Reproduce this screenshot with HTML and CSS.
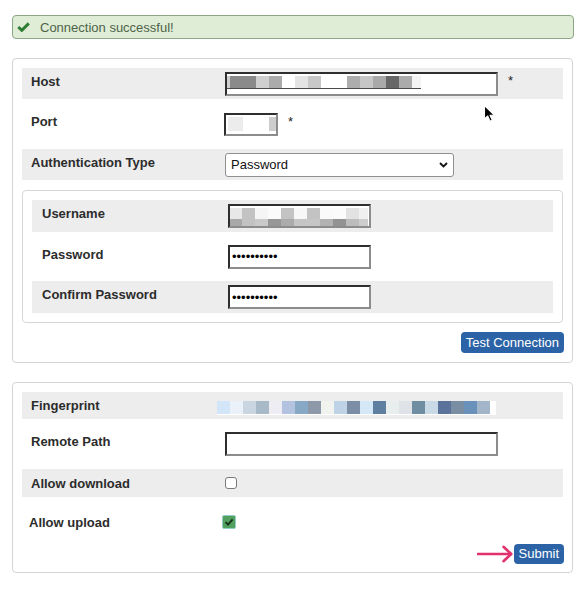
FILE: index.html
```html
<!DOCTYPE html>
<html>
<head>
<meta charset="utf-8">
<title>Connection</title>
<link rel="stylesheet" href="styles.css">
</head>
<body>
<div class="page">
  <div class="alert">
    <svg class="alert-icon" width="13" height="10" viewBox="0 0 13 10"><polyline points="1.3,5 4.8,8.4 11.8,1.4" fill="none" stroke="#2f7c33" stroke-width="2.9"/></svg>
    <span>Connection successful!</span>
  </div>

  <div class="panel">
    <div class="row grey h31">
      <div class="lbl">Host</div>
      <div class="field host-field"><div class="mosaic m-host"></div></div>
      <span class="req">*</span>
    </div>
    <div class="row h50">
      <div class="lbl">Port</div>
      <div class="field port-field"><div class="mosaic m-port"></div></div>
      <span class="req">*</span>
    </div>
    <div class="row grey h31">
      <div class="lbl">Authentication Type</div>
      <div class="select"><span>Password</span><svg width="9" height="6" viewBox="0 0 9 6"><polyline points="1,1 4.5,4.5 8,1" fill="none" stroke="#111" stroke-width="1.8"/></svg></div>
    </div>

    <div class="subpanel">
      <div class="row sub grey h32">
        <div class="lbl">Username</div>
        <div class="field user-field"><div class="mosaic m-user"></div></div>
      </div>
      <div class="row sub h49">
        <div class="lbl">Password</div>
        <input class="field pw" type="password" value="abcdefghij" readonly>
      </div>
      <div class="row sub grey h32">
        <div class="lbl">Confirm Password</div>
        <input class="field pw" type="password" value="abcdefghij" readonly>
      </div>
    </div>

    <div class="actions">
      <button class="btn btn-test" type="button">Test Connection</button>
    </div>
  </div>

  <div class="panel panel-2">
    <div class="row grey h27">
      <div class="lbl">Fingerprint</div>
      <div class="mosaic m-finger"></div>
    </div>
    <div class="row h50">
      <div class="lbl lbl-up">Remote Path</div>
      <div class="field path-field"></div>
    </div>
    <div class="row grey h28">
      <div class="lbl">Allow download</div>
      <span class="cb"></span>
    </div>
    <div class="row h45 row-upload">
      <div class="lbl">Allow upload</div>
      <span class="cb cb-on"><svg width="12" height="12" viewBox="0 0 12 12"><polyline points="2.6,6.2 5,8.6 9.6,3.4" fill="none" stroke="#17301a" stroke-width="1.9"/></svg></span>
    </div>
    <div class="actions actions-2">
      <svg class="arrow" width="37" height="18" viewBox="0 0 37 18"><line x1="1" y1="9" x2="34" y2="9" stroke="#e1326f" stroke-width="2.6" stroke-linecap="round"/><polyline points="26.5,1.8 34.2,9 26.5,16.2" fill="none" stroke="#e1326f" stroke-width="2.6" stroke-linecap="round" stroke-linejoin="round"/></svg>
      <button class="btn btn-submit" type="button">Submit</button>
    </div>
  </div>

  <svg class="cursor" width="13" height="19" viewBox="0 0 13 19"><path d="M1.5 1.5 L1.5 15 L4.7 12 L7.1 17.3 L9.3 16.3 L7 11.2 L11.3 11.2 Z" fill="#000" stroke="#fff" stroke-width="1.1" stroke-linejoin="round"/></svg>
</div>
</body>
</html>
```

FILE: styles.css
```css
* { box-sizing: border-box; }
html, body { margin: 0; background: #fff; }
body {
  font-family: "Liberation Sans", Arial, Helvetica, sans-serif;
  font-size: 13px;
  color: #222;
}
.page { position: relative; padding: 15px 14px 0 12px; }

.alert {
  height: 24px;
  display: flex;
  align-items: center;
  gap: 10px;
  padding-left: 4px;
  background: #dfedd7;
  border: 1px solid #8da685;
  border-radius: 4px;
  color: #4e6349;
}
.alert-icon { flex: none; }

.panel {
  margin: 19px 1px 0 0;
  border: 1px solid #d4d4d4;
  border-radius: 4px;
  padding: 9px;
}
.panel-2 { padding-bottom: 8px; }

.row { display: flex; align-items: center; padding-left: 9px; }
.grey { background: #ededed; }
.h27 { height: 27px; }
.h28 { height: 28px; }
.h31 { height: 31px; }
.h32 { height: 32px; }
.h45 { height: 45px; padding-top: 5px; }
.h49 { height: 49px; }
.h50 { height: 50px; }

.lbl {
  width: 194px;
  flex: none;
  font-weight: bold;
  color: #2c2c2c;
  padding-bottom: 5px;
}
.panel-2 .lbl { padding-bottom: 0; }
.panel-2 .lbl-up { padding-bottom: 5px; }
.row.sub { padding-left: 10px; }
.row.sub .lbl { width: 186px; }
.row-upload { padding-left: 7px; }
.row-upload .lbl { width: 196px; }

.field {
  flex: none;
  height: 24px;
  border-style: solid;
  border-width: 2px;
  border-color: #2e2e2e #8c8c8c #8c8c8c #2e2e2e;
  background: #fff;
  padding: 2px 0 0 0;
}
.host-field { width: 273px; }
.port-field { width: 54px; height: 23px; margin-left: -1px; padding-left: 2px; }
.user-field { width: 143px; }
.path-field { width: 273px; }
.pw {
  width: 143px;
  padding: 0 2px;
  font-family: "Liberation Sans", Arial, sans-serif;
  font-size: 13px;
  color: #000;
  outline: none;
}

.req { margin-left: 10px; margin-bottom: 6px; color: #222; }

.mosaic { flex: none; }
.m-host {
  width: 194px;
  height: 13px;
  border-bottom: 1px solid #4a4a4a;
  background: linear-gradient(to right, #cfcfcf 0 3px, #8a8a8a 3px 29px, #cfcfcf 29px 42px, #ababab 42px 55px, #fff 55px 68px, #e4e4e4 68px 81px, #c8c8c8 81px 94px, #fff 94px 120px, #adadad 120px 133px, #c6c6c6 133px 146px, #a9a9a9 146px 159px, #676767 159px 172px, #ababab 172px 185px, #f4f4f4 185px 194px);
}
.m-port {
  width: 48px;
  height: 14px;
  background: linear-gradient(to right, #ececec 0 15px, #fff 15px 41px, #cdcdcd 41px 48px);
}
.m-user {
  width: 138px;
  height: 18px;
  background:
    linear-gradient(to right, #e8e8e8 0 12px, #c2c2c2 12px 25px, #f5f5f5 25px 38px, #fbfbfb 38px 51px, #c3c3c3 51px 64px, #f7f7f7 64px 77px, #c3c3c3 77px 90px, #fafafa 90px 103px, #fbfbfb 103px 116px, #e2e2e2 116px 129px, #f0f0f0 129px 138px) top / 100% 11px no-repeat,
    linear-gradient(to right, #a9a9a9 0 12px, #c2c2c2 12px 25px, #c9c9c9 25px 38px, #979797 38px 51px, #ababab 51px 64px, #c5c5c5 64px 77px, #c6c6c6 77px 90px, #b2b2b2 90px 103px, #939393 103px 116px, #bcbcbc 116px 129px, #cdcdcd 129px 138px) bottom / 100% 7px no-repeat;
}
.m-finger {
  width: 279px;
  height: 14px;
  margin-left: -8px;
  margin-top: 5px;
  border-bottom: 1px solid #fff;
  background: linear-gradient(to right,
    #d3e5f8 0 13px, #ebf1f9 13px 26px, #c9d6e1 26px 39px, #a8bac8 39px 52px,
    #eeedf4 52px 65px, #b3c3df 65px 78px, #88a9c6 78px 91px, #8d99a9 91px 104px,
    #f1f3ee 104px 117px, #bed3e6 117px 130px, #7b8ea6 130px 143px, #d5e8f7 143px 156px,
    #5f7fa0 156px 169px, #e8eeee 169px 182px, #dfe2e7 182px 195px, #6f8ea1 195px 208px,
    #cad9e6 208px 221px, #5b739a 221px 234px, #7a8ea3 234px 247px, #6a91ba 247px 260px,
    #a2b5c9 260px 273px, #fff 273px 279px);
}

.select {
  flex: none;
  width: 229px;
  height: 24px;
  display: flex;
  align-items: center;
  justify-content: space-between;
  padding: 0 5px 0 5px;
  border: 1px solid #8f8f8f;
  border-radius: 3px;
  background: #fff;
  color: #111;
}

.subpanel {
  margin-top: 10px;
  border: 1px solid #d6d6d6;
  border-radius: 4px;
  padding: 9px;
}

.actions {
  display: flex;
  justify-content: flex-end;
  align-items: center;
  margin-top: 9px;
  margin-right: -1px;
}
.actions-2 { margin-top: 2px; }
.arrow { display: block; flex: none; }

.btn {
  height: 21px;
  padding: 0 5px;
  border: none;
  border-radius: 4px;
  background: #2c63a6;
  color: #fff;
  font-family: "Liberation Sans", Arial, sans-serif;
  font-size: 13px;
  line-height: 21px;
}
.btn-submit { height: 20px; line-height: 20px; }

.cb {
  flex: none;
  width: 12px;
  height: 12px;
  border: 1px solid #7a7a7a;
  border-radius: 3px;
  background: #fff;
}
.cb-on {
  width: 14px;
  height: 14px;
  margin-left: -3px;
  border: 1px solid #93cdc6;
  border-radius: 2px;
  background: #51a05e;
  display: flex;
  align-items: center;
  justify-content: center;
}
.cb-on svg { display: block; }

.cursor { position: absolute; left: 483px; top: 104px; }
```
